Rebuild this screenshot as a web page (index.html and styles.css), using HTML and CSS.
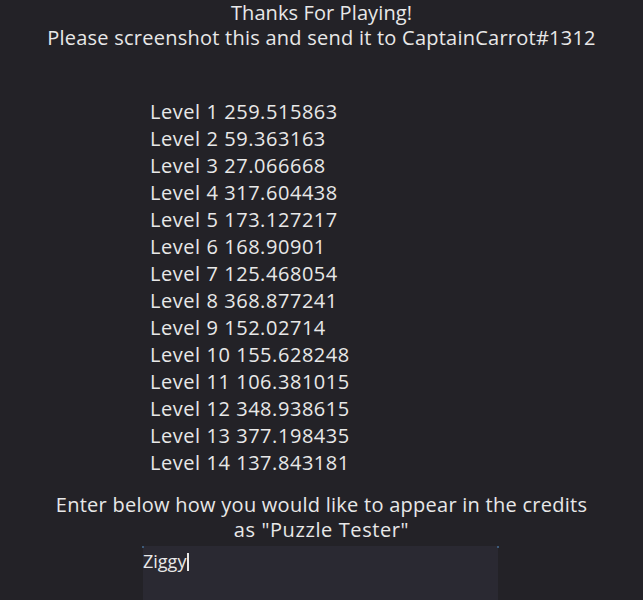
FILE: index.html
```html
<!DOCTYPE html>
<html>
<head>
<meta charset="utf-8">
<link rel="stylesheet" href="styles.css">
</head>
<body>
<div class="screen">
  <div class="header">
    <div class="title">Thanks For Playing!</div>
    <div>Please screenshot this and send it to CaptainCarrot#1312</div>
  </div>
  <div class="levels">
    <div>Level 1 259.515863</div>
    <div>Level 2 59.363163</div>
    <div>Level 3 27.066668</div>
    <div>Level 4 317.604438</div>
    <div>Level 5 173.127217</div>
    <div>Level 6 168.90901</div>
    <div>Level 7 125.468054</div>
    <div>Level 8 368.877241</div>
    <div>Level 9 152.02714</div>
    <div>Level 10 155.628248</div>
    <div>Level 11 106.381015</div>
    <div>Level 12 348.938615</div>
    <div>Level 13 377.198435</div>
    <div>Level 14 137.843181</div>
  </div>
  <div class="credits">
    <div>Enter below how you would like to appear in the credits</div>
    <div class="role">as "Puzzle Tester"</div>
  </div>
  <div class="input-row">
    <div class="input"><span class="value">Ziggy</span><span class="caret"></span></div>
  </div>
</div>
</body>
</html>
```
FILE: styles.css
```css
html, body {
  margin: 0;
  padding: 0;
  background: #232227;
  overflow: hidden;
}
.screen {
  width: 643px;
  height: 600px;
  display: flex;
  flex-direction: column;
  font-family: "Open Sans", "Noto Sans", sans-serif;
  font-size: 20px;
  color: #e8e8e8;
}
.header {
  text-align: center;
  line-height: 25px;
  letter-spacing: 0.24px;
}
.header .title {
  letter-spacing: 0.1px;
}
.levels {
  margin-top: 48px;
  padding-left: 150px;
  line-height: 27px;
  letter-spacing: 0.55px;
}
.credits {
  margin-top: 16px;
  text-align: center;
  line-height: 25px;
  letter-spacing: 0.26px;
}
.credits .role {
  letter-spacing: 0.6px;
}
.input-row {
  margin-top: 4px;
  padding-left: 143px;
}
.input {
  width: 355px;
  height: 60px;
  background: #2a2932;
  box-sizing: border-box;
  padding-top: 3px;
  font-size: 18px;
  line-height: 24px;
  display: flex;
  align-items: flex-start;
  position: relative;
}
.input::before, .input::after {
  content: "";
  position: absolute;
  top: 0;
  width: 2px;
  height: 2px;
  background: #3d5a78;
}
.input::before { left: -1px; }
.input::after { right: -1px; }
.caret {
  width: 2px;
  height: 18px;
  margin-top: 4px;
  margin-left: 1px;
  background: #e8e8e8;
}
```
